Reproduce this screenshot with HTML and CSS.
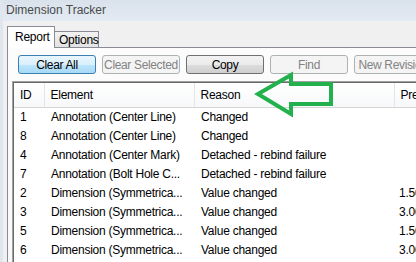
FILE: index.html
```html
<!DOCTYPE html>
<html lang="en">
<head>
  <meta charset="UTF-8">
  <title>Dimension Tracker</title>
  <link rel="stylesheet" href="styles.css">
</head>
<body>
  <div class="window">
    <div class="title-bar">Dimension Tracker</div>
    <div class="window-body">
      <div class="tabs">
        <div class="tab active">Report</div>
        <div class="tab">Options</div>
      </div>
      <div class="tab-panel">
        <div class="toolbar">
          <button class="btn focused">Clear All</button>
          <button class="btn" disabled>Clear Selected</button>
          <button class="btn">Copy</button>
          <button class="btn" disabled>Find</button>
          <button class="btn" disabled>New Revision</button>
        </div>
        <div class="list-view">
          <table class="grid">
            <colgroup>
              <col class="col-id">
              <col class="col-element">
              <col class="col-reason">
              <col class="col-prev">
            </colgroup>
            <thead>
              <tr>
                <th>ID</th>
                <th>Element</th>
                <th>Reason</th>
                <th>Previous</th>
              </tr>
            </thead>
            <tbody>
              <tr><td>1</td><td>Annotation (Center Line)</td><td>Changed</td><td></td></tr>
              <tr><td>8</td><td>Annotation (Center Line)</td><td>Changed</td><td></td></tr>
              <tr><td>4</td><td>Annotation (Center Mark)</td><td>Detached - rebind failure</td><td></td></tr>
              <tr><td>7</td><td>Annotation (Bolt Hole C...</td><td>Detached - rebind failure</td><td></td></tr>
              <tr><td>2</td><td>Dimension (Symmetrica...</td><td>Value changed</td><td>1.500</td></tr>
              <tr><td>3</td><td>Dimension (Symmetrica...</td><td>Value changed</td><td>3.000</td></tr>
              <tr><td>5</td><td>Dimension (Symmetrica...</td><td>Value changed</td><td>1.500</td></tr>
              <tr><td>6</td><td>Dimension (Symmetrica...</td><td>Value changed</td><td>3.000</td></tr>
            </tbody>
          </table>
        </div>
      </div>
    </div>
  </div>

  <!-- hand drawn annotation arrow on top of the screenshot -->
  <svg class="arrow" width="416" height="262" viewBox="0 0 416 262">
    <polygon points="258,94 291,75 291,84 331,84 331,104 291,104 291,114"
             fill="none" stroke="#22b14c" stroke-width="4" stroke-linejoin="miter"/>
  </svg>
</body>
</html>
```

FILE: styles.css
```css
* {
  margin: 0;
  padding: 0;
  box-sizing: border-box;
}

body {
  font-family: "Liberation Sans", Arial, sans-serif;
  font-size: 12px;
  letter-spacing: -0.25px;
  color: #000;
  width: 416px;
  height: 262px;
  overflow: hidden;
  position: relative;
  background: #f0f0f0;
}

.window {
  width: 416px;
  height: 262px;
  border-left: 3px solid #dfe6ee;
  overflow: hidden;
}

.title-bar {
  height: 21px;
  background: linear-gradient(to bottom, #d9e2ec, #e3eaf3);
  color: #4a4a4a;
  font-size: 12px;
  letter-spacing: 0;
  margin-left: -3px;
  padding: 3px 0 0 6px;
}

.window-body {
  padding: 5px 0 0 4px;
  background: #f0f0f0;
  height: 100%;
}

.tabs {
  display: flex;
  align-items: flex-end;
  height: 21px;
  position: relative;
  z-index: 1;
}

.tab {
  height: 16px;
  width: 45px;
  padding: 1px 0 0 4px;
  border: 1px solid #898c95;
  border-bottom: none;
  background: linear-gradient(to bottom, #f2f2f2, #e3e3e3);
  margin-left: -1px;
}

.tab.active {
  width: 48px;
  height: 22px;
  padding: 3px 0 0 7px;
  margin-left: 0;
  margin-bottom: -1px;
  background: #fff;
}

.tab-panel {
  border: 1px solid #898c95;
  border-right: none;
  background: linear-gradient(to bottom, #fcfcfc, #f6f6f6);
  height: 400px;
  padding: 7px 0 0 4px;
}

.toolbar {
  display: flex;
  gap: 6px;
  padding-left: 6px;
  height: 19px;
  white-space: nowrap;
}

.btn {
  flex: 0 0 78px;
  height: 19px;
  padding: 0;
  font-family: inherit;
  font-size: 12px;
  letter-spacing: -0.35px;
  color: #000;
  border: 1px solid #707070;
  border-radius: 3px;
  background: linear-gradient(to bottom, #f2f2f2 0%, #ebebeb 50%, #dddddd 51%, #cfcfcf 100%);
  overflow: hidden;
  white-space: nowrap;
}

.btn.focused {
  border-color: #3c7fb1;
  background: linear-gradient(to bottom, #eaf6fd 0%, #d9f0fc 50%, #bee6fd 51%, #a7d9f5 100%);
}

.btn:disabled {
  color: #838383;
  border-color: #adb2b5;
  background: #f4f4f4;
}

.list-view {
  margin-top: 7px;
  border: 1px solid #a0a0a0;
  border-right: none;
  box-shadow: inset 1px 1px 0 #696969;
  background: #fff;
  height: 300px;
  padding: 1px 0 0 1px;
}

.grid {
  border-collapse: collapse;
  table-layout: fixed;
  width: 480px;
}

.col-id { width: 30px; }
.col-element { width: 150px; }
.col-reason { width: 200px; }
.col-prev { width: 100px; }

.grid th {
  height: 24px;
  font-weight: normal;
  text-align: left;
  padding-left: 6px;
  background: linear-gradient(to bottom, #ffffff, #f7f8fa);
  border-right: 1px solid #e3e5e8;
  border-bottom: 1px solid #d5d5d5;
  white-space: nowrap;
  overflow: hidden;
}

.grid td {
  height: 19px;
  padding-left: 7px;
  white-space: nowrap;
  overflow: hidden;
}

.grid td:first-child {
  padding-left: 6px;
}

.grid td:last-child {
  padding-left: 5px;
}

.arrow {
  position: absolute;
  left: 0;
  top: 0;
  pointer-events: none;
}
```
